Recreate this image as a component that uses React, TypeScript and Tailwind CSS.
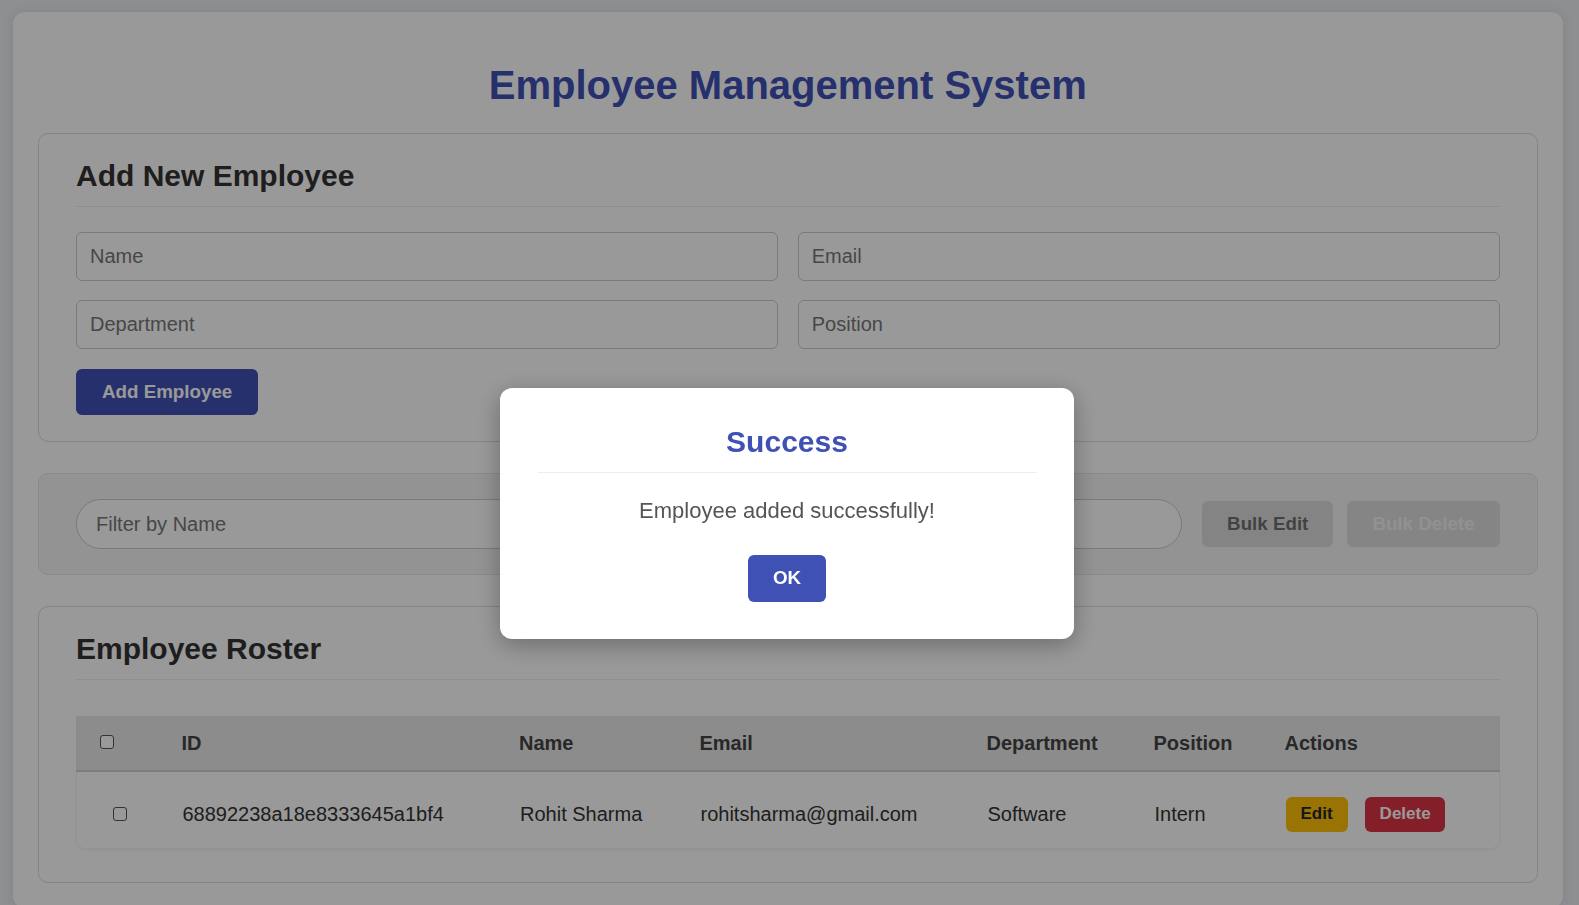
import React from 'react';

const employees = [
    {
        id: '68892238a18e8333645a1bf4',
        name: 'Rohit Sharma',
        email: 'rohitsharma@gmail.com',
        department: 'Software',
        position: 'Intern'
    }
];

const cols = 'grid grid-cols-[86.5px_337.5px_180.5px_287px_167px_131px_1fr] items-center';

const Checkbox = () => (
    <input
        type="checkbox"
        className="block h-[14px] w-[14px] appearance-none rounded-[3px] border-[1.5px] border-[#555] bg-white"
    />
);

const App = () => {
    return (
        <div className="h-screen overflow-hidden bg-[#eceef2] font-['Liberation_Sans',Arial,sans-serif]">
            <div className="ml-[12.5px] mt-[12px] w-[1550.5px] rounded-[12px] bg-white px-[25px] pb-[25px] pt-[25px] shadow-[0_0_12px_rgba(0,0,0,0.08)]">
                <h1 className="mb-[25px] mt-[25px] text-center text-[40px] font-bold leading-[46px] text-[#3f51b5]">
                    Employee Management System
                </h1>

                <section className="rounded-[10px] border border-[#dddddd] px-[37.5px] pb-[26px] pt-[25px]">
                    <h2 className="border-b border-[#eeeeee] pb-[13px] text-[30px] font-bold leading-[34px] text-[#333]">
                        Add New Employee
                    </h2>
                    <div className="mt-[25px] grid grid-cols-2 gap-x-[20px] gap-y-[19px]">
                        {['Name', 'Email', 'Department', 'Position'].map((p) => (
                            <input
                                key={p}
                                placeholder={p}
                                className="h-[49px] rounded-[6px] border border-[#cccccc] px-[13px] text-[20px] text-[#333] placeholder:text-[#777]"
                            />
                        ))}
                    </div>
                    <button
                        type="button"
                        className="mt-[20px] h-[46px] rounded-[6px] bg-[#3f51b5] px-[26px] text-[18.75px] font-bold text-white"
                    >
                        Add Employee
                    </button>
                </section>

                <section className="mt-[31px] flex items-center rounded-[10px] border border-[#e6e6e6] bg-[#f5f5f5] px-[37.5px] py-[25px]">
                    <input
                        placeholder="Filter by Name"
                        className="h-[50px] flex-1 rounded-full border border-[#cccccc] bg-white px-[19px] text-[20px] text-[#333] placeholder:text-[#777]"
                    />
                    <button
                        type="button"
                        className="ml-[20px] h-[46px] rounded-[6px] bg-[#dddddd] px-[25px] text-[18.75px] font-bold text-[#6f6f6f]"
                    >
                        Bulk Edit
                    </button>
                    <button
                        type="button"
                        disabled
                        className="ml-[14px] h-[46px] rounded-[6px] bg-[#dedede] px-[25px] text-[18.75px] font-bold text-[#f2f2f2]"
                    >
                        Bulk Delete
                    </button>
                </section>

                <section className="mt-[31px] rounded-[10px] border border-[#dddddd] px-[37.5px] pb-[33px] pt-[25px]">
                    <h2 className="border-b border-[#eeeeee] pb-[13px] text-[30px] font-bold leading-[34px] text-[#333]">
                        Employee Roster
                    </h2>

                    <div className="mt-[36px]">
                        <div className={`${cols} h-[56px] border-b-[2.5px] border-[#d2d2d2] bg-[#eaeaea] text-[20px] font-bold text-[#444]`}>
                            <div className="flex items-center pb-[3px] pl-[24px]">
                                <Checkbox />
                            </div>
                            <div className="pl-[19px]">ID</div>
                            <div className="pl-[19px]">Name</div>
                            <div className="pl-[19px]">Email</div>
                            <div className="pl-[19px]">Department</div>
                            <div className="pl-[19px]">Position</div>
                            <div className="pl-[19px]">Actions</div>
                        </div>

                        {employees.map((emp) => (
                            <div
                                key={emp.id}
                                className={`${cols} h-[77px] rounded-b-[8px] border border-t-0 border-[#f3f3f3] bg-white pt-[8px] text-[20px] text-[#333] shadow-[0_2px_4px_rgba(0,0,0,0.03)]`}
                            >
                                <div className="flex items-center justify-center">
                                    <Checkbox />
                                </div>
                                <div className="pl-[19px]">{emp.id}</div>
                                <div className="pl-[19px]">{emp.name}</div>
                                <div className="pl-[19px]">{emp.email}</div>
                                <div className="pl-[19px]">{emp.department}</div>
                                <div className="pl-[19px]">{emp.position}</div>
                                <div className="flex items-center gap-[17.5px] pl-[19px]">
                                    <button
                                        type="button"
                                        className="h-[35px] rounded-[6px] bg-[#ffc107] px-[15px] text-[17px] font-bold text-[#212529]"
                                    >
                                        Edit
                                    </button>
                                    <button
                                        type="button"
                                        className="h-[35px] rounded-[6px] bg-[#dc3545] px-[14.5px] text-[17px] font-bold text-white"
                                    >
                                        Delete
                                    </button>
                                </div>
                            </div>
                        ))}
                    </div>
                </section>
            </div>

            <div className="fixed inset-0 flex justify-center bg-black/40 pr-[5px] pt-[388px]">
                <div className="h-fit w-[574px] rounded-[12px] bg-white px-[37.5px] pb-[37px] pt-[37px] text-center shadow-[0_6px_24px_rgba(0,0,0,0.3)]">
                    <h3 className="border-b border-[#eeeeee] pb-[12.5px] text-[30px] font-bold leading-[34px] text-[#3f51b5]">
                        Success
                    </h3>
                    <p className="mt-[25px] text-[22px] leading-[25px] text-[#555]">Employee added successfully!</p>
                    <button
                        type="button"
                        className="mt-[32px] h-[47px] rounded-[6px] bg-[#3f51b5] px-[25px] text-[18.75px] font-bold text-white"
                    >
                        OK
                    </button>
                </div>
            </div>
        </div>
    );
};

export default App;
